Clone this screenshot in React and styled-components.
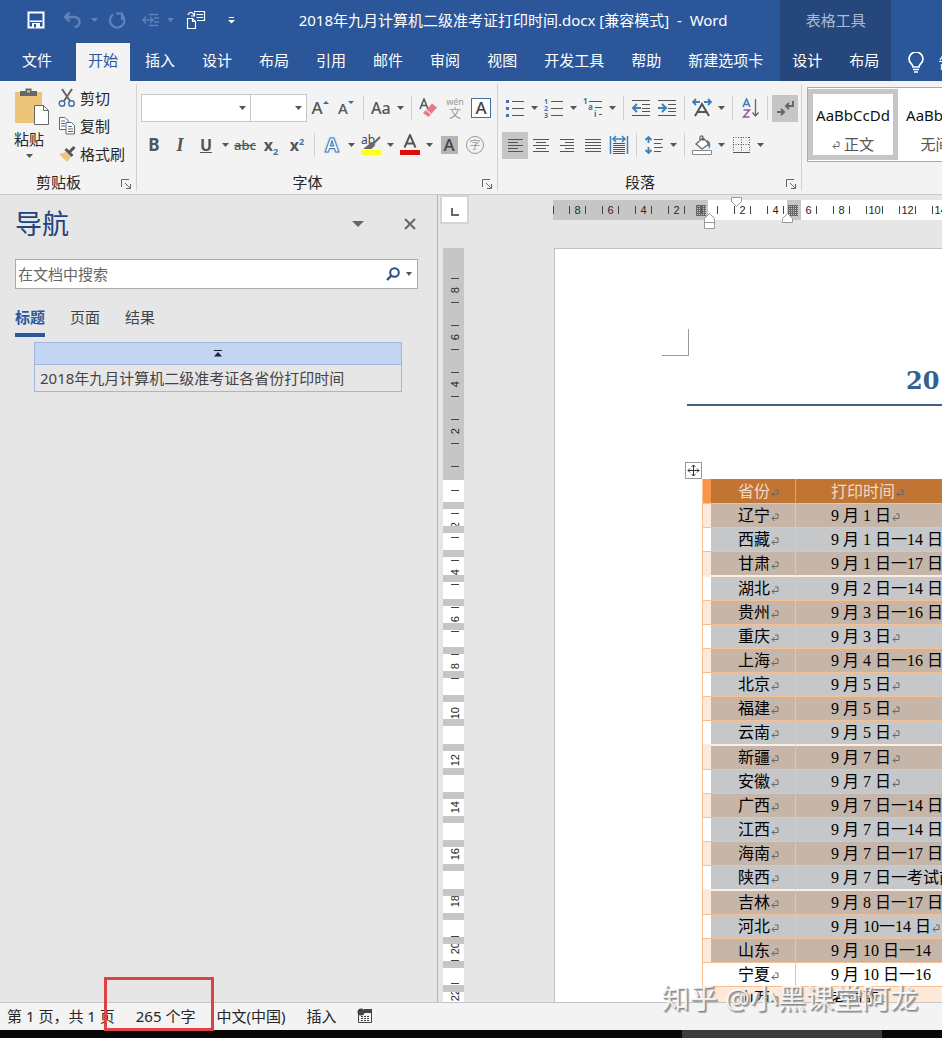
import React, { useState } from 'react';
import styled, { createGlobalStyle, css } from 'styled-components';

const mainTabs = ['开始', '插入', '设计', '布局', '引用', '邮件', '审阅', '视图', '开发工具', '帮助', '新建选项卡'];
const toolTabs = ['设计', '布局'];
const navTabs = ['标题', '页面', '结果'];

const rows = [
    { name: '辽宁', time: '9 月 1 日' },
    { name: '西藏', time: '9 月 1 日一14 日' },
    { name: '甘肃', time: '9 月 1 日一17 日', last: true },
    { name: '湖北', time: '9 月 2 日一14 日' },
    { name: '贵州', time: '9 月 3 日一16 日' },
    { name: '重庆', time: '9 月 3 日' },
    { name: '上海', time: '9 月 4 日一16 日' },
    { name: '北京', time: '9 月 5 日' },
    { name: '福建', time: '9 月 5 日' },
    { name: '云南', time: '9 月 5 日', last: true },
    { name: '新疆', time: '9 月 7 日' },
    { name: '安徽', time: '9 月 7 日' },
    { name: '广西', time: '9 月 7 日一14 日' },
    { name: '江西', time: '9 月 7 日一14 日' },
    { name: '海南', time: '9 月 7 日一17 日' },
    { name: '陕西', time: '9 月 7 日一考试前', last: true },
    { name: '吉林', time: '9 月 8 日一17 日' },
    { name: '河北', time: '9 月 10一14 日' },
    { name: '山东', time: '9 月 10 日一14' },
    { name: '宁夏', time: '9 月 10 日一16', plain: true },
    { name: '山西', time: '考前取', plain: true },
];

const topMarks = [8, 6, 4, 2, '', 2, 4, 6, 8, 10, 12, 14, 16, 18, 20, 22, 24, 26, 28, 30];
const sideMarks = [8, 6, 4, 2, '', 2, 4, 6, 8, 10, 12, 14, 16, 18, 20, 22];

const Glyph = ({ w = 20, h = 20, children }) => (
    <svg width={w} height={h} viewBox={`0 0 ${w} ${h}`} fill="none" aria-hidden="true">{children}</svg>
);

const Caret = ({ color = '#555', w = 7, h = 4 }) => (
    <svg width={w} height={h} viewBox="0 0 7 4" preserveAspectRatio="none" aria-hidden="true">
        <path d="M0 0h7L3.500 4z" fill={color} />
    </svg>
);

const Lines = ({ xs }) => (
    <Glyph>
        {xs.map(([a, b], i) => <path key={i} d={`M${a} ${4.5 + i * 3}H${b}`} stroke="#555" />)}
    </Glyph>
);

const Launcher = () => (
    <Glyph w={10} h={10}>
        <path d="M.5 8V.5H8M4 4l5 5M9.500 5v4.500H5" stroke="#666" />
    </Glyph>
);

const ReturnMark = () => (
    <svg width="8" height="9" viewBox="0 0 8 9" fill="none" aria-hidden="true">
        <path d="M4 1h3v4.500H1M3.500 3L1 5.500 3.500 8" stroke="#666" />
    </svg>
);

function QuickAccess(){
    return (
        <QuickBar>
            <QuickButton $w={36} aria-label="保存">
                <Glyph w={18} h={18}>
                    <path d="M1.500 1.500h15v15h-15z" stroke="#fff" strokeWidth="2" />
                    <path d="M3 9.500h12v1.500H3zM5 12h8v5H5z" fill="#fff" />
                    <path d="M7 13h2v3.500H7z" fill="#2b579a" />
                </Glyph>
            </QuickButton>
            <QuickButton $w={36} aria-label="撤消">
                <Glyph w={20} h={18}>
                    <path d="M7.500 1.500L3 6l4.500 4.500M3.500 6H12c8 0 6.500 10 .5 10" stroke="#5f82b8" strokeWidth="2.400" />
                </Glyph>
            </QuickButton>
            <QuickButton $w={8} aria-label="撤消选项"><Caret color="#5f82b8" /></QuickButton>
            <QuickButton $w={40} aria-label="恢复">
                <Glyph w={20} h={18}>
                    <path d="M5 3.500a7.200 7.200 0 1 0 9.500 1M14 9V2.500H8" stroke="#5f82b8" strokeWidth="2.200" />
                </Glyph>
            </QuickButton>
            <QuickButton $w={26} aria-label="缩进">
                <Glyph w={18} h={16}>
                    <path d="M1 8h9M4 4.500L1 8l3 3.500M8 5l3 3-3 3M7 2.500h9M12 6h5M12 10h5M7 13.500h9" stroke="#5f82b8" strokeWidth="1.400" />
                </Glyph>
            </QuickButton>
            <QuickButton $w={12} aria-label="缩进选项"><Caret color="#5f82b8" /></QuickButton>
            <QuickButton $w={40} aria-label="邮件合并">
                <Glyph w={20} h={20}>
                    <path d="M1.500 8.500h5l3 3v7h-8zM6.500 8.500v3h3M8 1.500h10.500v9H11M10.500 4.500H17M10.500 7.500H17M2 5c1-3 4-4 6 0M8.500 2.500V6H5" stroke="#fff" strokeWidth="1.200" />
                </Glyph>
            </QuickButton>
            <QuickButton $w={30} aria-label="自定义快速访问工具栏">
                <Glyph w={7} h={8}><path d="M1 1.500h5" stroke="#fff" /><path d="M0 4h7L3.500 7.500z" fill="#fff" /></Glyph>
            </QuickButton>
        </QuickBar>
    )
}

function ClipboardGroup(){
    return (
        <Group>
            <ClipboardBody>
                <PasteButton>
                    <Glyph w={36} h={40}>
                        <path d="M1 5h27v31H1z" fill="#ecc57b" />
                        <path d="M6 4h5.500V1.500h6V4H23v5H6z" fill="#666" />
                        <path d="M13 3.500h3v2h-3z" fill="#ecc57b" />
                        <path d="M20.500 18.500h9l5 5v14h-14z" fill="#fff" stroke="#666" />
                        <path d="M29.500 18.500v5h5" stroke="#666" />
                    </Glyph>
                    <PasteLabel>粘贴<Caret /></PasteLabel>
                </PasteButton>
                <ClipboardList>
                    <ClipButton>
                        <Glyph w={18} h={20}>
                            <path d="M4 1l8 12M14 1L6 13" stroke="#666" strokeWidth="2" />
                            <circle cx="4" cy="15.500" r="2.800" stroke="#41719c" strokeWidth="1.400" />
                            <circle cx="13.500" cy="15.500" r="2.800" stroke="#41719c" strokeWidth="1.400" />
                        </Glyph>
                        剪切
                    </ClipButton>
                    <ClipButton>
                        <Glyph w={18} h={20}>
                            <path d="M1.500 1.500h5.500l3 3v9H1.500z" fill="#fff" stroke="#666" />
                            <path d="M3 5h4M3 7.500h4M3 10h4" stroke="#41719c" />
                            <path d="M8 6.500h5.500l3 3v8.500H8z" fill="#fff" stroke="#666" />
                            <path d="M10 10.500h4M10 13h5M10 15.500h5" stroke="#41719c" />
                        </Glyph>
                        复制
                    </ClipButton>
                    <ClipButton>
                        <Glyph w={18} h={20}>
                            <path d="M1 10l7-2 5 5-4 5z" fill="#ecc57b" />
                            <path d="M7.500 5l7 7M10.500 9l6-6" stroke="#555" strokeWidth="3" />
                        </Glyph>
                        格式刷
                    </ClipButton>
                </ClipboardList>
            </ClipboardBody>
            <GroupFoot><span>剪贴板</span><LaunchButton aria-label="剪贴板设置"><Launcher /></LaunchButton></GroupFoot>
        </Group>
    )
}

function FontGroup(){
    return (
        <Group>
            <ToolRows>
                <ToolRow>
                    <FontSelect aria-label="字体" $w={110}><option></option></FontSelect>
                    <FontSelect aria-label="字号" $w={56} $joined><option></option></FontSelect>
                    <Tool aria-label="增大字号">
                        <Letter $size={17}>A</Letter>
                        <Glyph w={6} h={16}><path d="M0 4h6L3 1z" fill="#2f6fb0" /></Glyph>
                    </Tool>
                    <Tool aria-label="减小字号">
                        <Letter $size={15}>A</Letter>
                        <Glyph w={6} h={16}><path d="M0 1h6L3 4z" fill="#2f6fb0" /></Glyph>
                    </Tool>
                    <Rule />
                    <Tool $split aria-label="更改大小写"><Letter $size={16}>Aa</Letter><Caret /></Tool>
                    <Rule />
                    <Tool aria-label="清除格式">
                        <Glyph>
                            <path d="M1 11L5 1l4 10M2.500 7.500h5" stroke="#555" strokeWidth="1.500" />
                            <path d="M4 15L13 5.500l5 4L9.500 19z" fill="#e8798b" />
                            <path d="M7 12l5 4" stroke="#f5d5da" strokeWidth="1.500" />
                        </Glyph>
                    </Tool>
                    <Tool aria-label="拼音指南"><Pinyin><small>wén</small>文</Pinyin></Tool>
                    <Tool aria-label="字符边框"><BoxedLetter>A</BoxedLetter></Tool>
                </ToolRow>
                <ToolRow>
                    <Tool aria-label="加粗"><Letter $bold $size={17}>B</Letter></Tool>
                    <Tool aria-label="倾斜"><Letter $bold $italic $serif $size={18}>I</Letter></Tool>
                    <Tool $split aria-label="下划线"><Indent><Letter $bold $size={16} $line="underline">U</Letter></Indent><Caret /></Tool>
                    <Tool aria-label="删除线"><Letter $size={13} $line="line-through">abc</Letter></Tool>
                    <Tool aria-label="下标"><Letter $bold $size={16}>x<sub>2</sub></Letter></Tool>
                    <Tool aria-label="上标"><Letter $bold $size={16}>x<sup>2</sup></Letter></Tool>
                    <Rule />
                    <Tool $split aria-label="文本效果"><GlowLetter>A</GlowLetter><Caret /></Tool>
                    <Tool $split aria-label="突出显示">
                        <Glyph w={20} h={22}>
                            <text x="0" y="10" fontSize="12" fontFamily="Noto Sans" fill="#444">ab</text>
                            <path d="M19 3l-8 8M11 9l-6 5h5l3-3z" stroke="#666" strokeWidth="2" fill="#666" />
                            <path d="M0 16h20v5H0z" fill="#ffff1e" />
                        </Glyph>
                        <Caret />
                    </Tool>
                    <Tool $split aria-label="字体颜色">
                        <Glyph w={20} h={22}>
                            <path d="M4.500 13.500L10 1l5.500 12.500M6.500 9.500h7" stroke="#555" strokeWidth="2" />
                            <path d="M0 16h20v5H0z" fill="#df0a0a" />
                        </Glyph>
                        <Caret />
                    </Tool>
                    <Tool aria-label="字符底纹"><ShadedLetter>A</ShadedLetter></Tool>
                    <Tool aria-label="带圈字符"><RingedLetter>字</RingedLetter></Tool>
                </ToolRow>
            </ToolRows>
            <GroupFoot><span>字体</span><LaunchButton aria-label="字体设置"><Launcher /></LaunchButton></GroupFoot>
        </Group>
    )
}

function ParagraphGroup(){
    return (
        <Group>
            <ToolRows>
                <ToolRow>
                    <Tool $split aria-label="项目符号">
                        <Glyph>
                            <path d="M1 2h3v3H1zM1 9h3v3H1zM1 16h3v3H1z" fill="#3f74ab" />
                            <path d="M7 3.500h12M7 10.500h12M7 17.500h12" stroke="#555" />
                        </Glyph>
                        <Caret />
                    </Tool>
                    <Tool $split aria-label="编号">
                        <Glyph>
                            <g fontSize="7" fontWeight="bold" fontFamily="Noto Sans" fill="#3f74ab">
                                <text x="0" y="6">1</text><text x="0" y="13">2</text><text x="0" y="20">3</text>
                            </g>
                            <path d="M7 3.500h12M7 10.500h12M7 17.500h12" stroke="#555" />
                        </Glyph>
                        <Caret />
                    </Tool>
                    <Tool $split aria-label="多级列表">
                        <Glyph>
                            <g fontSize="8" fontWeight="bold" fontFamily="Noto Sans" fill="#3f74ab">
                                <text x="0" y="6">1</text><text x="5" y="12">a</text><text x="11" y="19">i</text>
                            </g>
                            <path d="M6 3.500h13M12 9.500h7M16 16.500h3" stroke="#555" />
                        </Glyph>
                        <Caret />
                    </Tool>
                    <Rule />
                    <Tool aria-label="减少缩进量">
                        <Glyph>
                            <path d="M1 2.500h18M11 6.500h8M11 10.500h8M11 13.500h8M1 17.500h18" stroke="#555" />
                            <path d="M2 10h8M6 6l-4 4 4 4" stroke="#3f7fb8" strokeWidth="2" />
                        </Glyph>
                    </Tool>
                    <Tool aria-label="增加缩进量">
                        <Glyph>
                            <path d="M1 2.500h18M11 6.500h8M11 10.500h8M11 13.500h8M1 17.500h18" stroke="#555" />
                            <path d="M1 10h8M5 6l4 4-4 4" stroke="#3f7fb8" strokeWidth="2" />
                        </Glyph>
                    </Tool>
                    <Rule />
                    <Tool $split aria-label="中文版式">
                        <Glyph>
                            <path d="M1 4h7M4 1L1 4l3 3M12 4h7M16 1l3 3-3 3" stroke="#3f7fb8" strokeWidth="1.800" />
                            <path d="M3 18L10 6l7 12M6 14h8" stroke="#555" strokeWidth="2" />
                        </Glyph>
                        <Caret />
                    </Tool>
                    <Rule />
                    <Tool aria-label="排序">
                        <Glyph>
                            <path d="M3 9l3.500-8L10 9M4 6.500h5" stroke="#3f7fb8" strokeWidth="1.600" />
                            <path d="M3.500 12h6l-6 7h6" stroke="#9355a5" strokeWidth="1.500" />
                            <path d="M15.500 1v17M12.500 14.500l3 3.500 3-3.500" stroke="#666" strokeWidth="1.300" />
                        </Glyph>
                    </Tool>
                    <Rule />
                    <Tool $on aria-label="显示编辑标记">
                        <Glyph>
                            <path d="M18 3v5h-6M14 5l-3 3 3 3M2 14h7M6 11l3 3-3 3" stroke="#666" strokeWidth="2" />
                        </Glyph>
                    </Tool>
                </ToolRow>
                <ToolRow>
                    <Tool $on aria-label="左对齐"><Lines xs={[[3, 18], [3, 13], [3, 18], [3, 13], [3, 18]]} /></Tool>
                    <Tool aria-label="居中"><Lines xs={[[2, 18], [5, 15], [2, 18], [5, 15], [2, 18]]} /></Tool>
                    <Tool aria-label="右对齐"><Lines xs={[[3, 17], [8, 17], [3, 17], [8, 17], [3, 17]]} /></Tool>
                    <Tool aria-label="两端对齐"><Lines xs={[[2, 18], [2, 18], [2, 18], [2, 18], [2, 18]]} /></Tool>
                    <Tool aria-label="分散对齐">
                        <Glyph>
                            <path d="M1.500 1v18M18.500 1v18M4 4h12M7 1L4 4l3 3M13 1l3 3-3 3" stroke="#3f7fb8" strokeWidth="1.500" />
                            <path d="M4 8.500h12M4 10.500h12M4 12.500h12M4 14.500h12M4 16.500h12M4 18.500h12" stroke="#555" />
                        </Glyph>
                    </Tool>
                    <Rule />
                    <Tool $split aria-label="行距">
                        <Glyph>
                            <path d="M4.500 2v6M1.500 5l3-3 3 3M4.500 12v6M1.500 15l3 3 3-3" stroke="#3f7fb8" strokeWidth="1.800" />
                            <path d="M10 4.500h9M10 8.500h7M10 12.500h9M10 16.500h7" stroke="#555" />
                        </Glyph>
                        <Caret />
                    </Tool>
                    <Rule />
                    <Tool $split aria-label="底纹">
                        <Glyph>
                            <path d="M4 9l7-6 6 6-7 5zM8 6V2.500c0-2 3-2 3 0V6" stroke="#666" strokeWidth="1.300" fill="#fff" />
                            <path d="M15 5c3 1 4 4 2.500 9L15 8z" fill="#3f7fb8" />
                            <path d="M.5 15.500h19v4H.5z" fill="#fff" stroke="#888" />
                        </Glyph>
                        <Caret />
                    </Tool>
                    <Tool $split aria-label="边框">
                        <Glyph>
                            <path d="M2.500 2v15M10.500 2v15M18.500 2v15M2 2.500h17M2 9.500h17" stroke="#555" strokeDasharray="1 1.500" />
                            <path d="M2 17.500h17" stroke="#555" />
                        </Glyph>
                        <Caret />
                    </Tool>
                </ToolRow>
            </ToolRows>
            <GroupFoot><span>段落</span><LaunchButton aria-label="段落设置"><Launcher /></LaunchButton></GroupFoot>
        </Group>
    )
}

function Navigation(){
    const [tab, setTab] = useState('标题');
    return (
        <NavPane>
            <NavHead>
                <h2>导航</h2>
                <PlainButton aria-label="窗格选项"><Caret color="#666" w={12} h={6} /></PlainButton>
                <PlainButton aria-label="关闭">
                    <Glyph w={12} h={12}><path d="M1 1l10 10M11 1L1 11" stroke="#666" strokeWidth="2" /></Glyph>
                </PlainButton>
            </NavHead>
            <SearchBox>
                <input type="text" aria-label="在文档中搜索" placeholder="在文档中搜索" />
                <PlainButton aria-label="搜索">
                    <Glyph w={14} h={14}>
                        <circle cx="8.500" cy="5.500" r="4.300" stroke="#2b4f84" strokeWidth="2" />
                        <path d="M5.500 8.500L1 13" stroke="#2b4f84" strokeWidth="2.400" />
                    </Glyph>
                </PlainButton>
                <PlainButton aria-label="搜索选项"><Caret w={6} /></PlainButton>
            </SearchBox>
            <NavTabs>
                {navTabs.map((name) => (
                    <NavTab key={name} $on={tab === name} onClick={() => setTab(name)}>{name}</NavTab>
                ))}
            </NavTabs>
            <Outline>
                <OutlineTop>
                    <Glyph w={8} h={8}><path d="M0 .5h8" stroke="#222" /><path d="M0 6.500L4 2l4 4.500z" fill="#222" /></Glyph>
                </OutlineTop>
                <OutlineItem href="#doc">2018年九月计算机二级准考证各省份打印时间</OutlineItem>
            </Outline>
        </NavPane>
    )
}

function DocumentArea(){
    return (
        <Workspace>
            <Corner><CornerBox aria-label="制表符">
                <Glyph w={10} h={10}><path d="M2 1v7h7" stroke="#666" strokeWidth="2" /></Glyph>
            </CornerBox></Corner>
            <TopRuler>
                <TopScale>
                    <EdgeTick />
                    {topMarks.map((m, i) => <TopMark key={i}><i /><span>{m}</span><i /></TopMark>)}
                </TopScale>
                <Markers>
                    <svg width="260" height="34" viewBox="0 0 260 34" fill="none" aria-hidden="true">
                        <path d="M234 3h14v20h-14z" fill="#c6c6c6" />
                        <path d="M143 8.500h10M143 10.500h10M143 12.500h10M143 14.500h10M143 16.500h10M143 18.500h10M235 8.500h10M235 10.500h10M235 12.500h10M235 14.500h10M235 16.500h10M235 18.500h10M143.500 8v11M145.500 8v11M147.500 8v11M149.500 8v11M151.500 8v11M235.500 8v11M237.500 8v11M239.500 8v11M241.500 8v11M243.500 8v11" stroke="#666" />
                        <g fill="#fff" stroke="#999">
                            <path d="M178.500.5h10v4l-5 5-5-5z" />
                            <path d="M151.500 25.500v-4l5-5 5 5v4zM151.500 25.500h10v6h-10z" />
                            <path d="M229.500 25.500v-4l5-5 5 5v4z" />
                        </g>
                    </svg>
                </Markers>
            </TopRuler>
            <SideRuler>
                <SideScale>
                    {sideMarks.map((m, i) => <SideMark key={i}><i /><span>{m}</span><i /></SideMark>)}
                </SideScale>
                <RowBars>
                    {rows.map((r) => <RowBar key={r.name} $gap={r.last ? 18 : 17} />)}
                </RowBars>
            </SideRuler>
            <Page id="doc">
                <CropMark />
                <DocTitle>2018年九月计算机二级准考证各省份打印时间</DocTitle>
                <MoveHandle aria-label="移动表格">
                    <Glyph w={13} h={13}>
                        <path d="M6.500 1v11M1 6.500h11M4.500 3l2-2 2 2M4.500 10l2 2 2-2M3 4.500l-2 2 2 2M10 4.500l2 2-2 2" stroke="#333" />
                    </Glyph>
                </MoveHandle>
                <DocTable>
                    <thead>
                        <tr><th>省份<ReturnMark /></th><th>打印时间<ReturnMark /></th></tr>
                    </thead>
                    <tbody>
                        {rows.map((r) => (
                            <DocRow key={r.name} $last={r.last} $plain={r.plain}>
                                <td>{r.name}<ReturnMark /></td>
                                <td>{r.time}{!/1[46]$/.test(r.time) && <ReturnMark />}</td>
                            </DocRow>
                        ))}
                    </tbody>
                </DocTable>
            </Page>
        </Workspace>
    )
}

export default function App(){
    const [active, setActive] = useState('开始');

    return (
        <>
            <GlobalStyle />
            <Shell>
                <Header>
                    <TitleRow>
                        <QuickAccess />
                        <DocName>2018年九月计算机二级准考证打印时间.docx [兼容模式]&nbsp; -&nbsp; Word</DocName>
                    </TitleRow>
                    <ToolTitle>表格工具</ToolTitle>
                    <TabRow>
                        <FileTab>文件</FileTab>
                        {mainTabs.map((name) => (
                            <Tab key={name} $on={active === name} onClick={() => setActive(name)}>{name}</Tab>
                        ))}
                    </TabRow>
                    <ToolTabRow>
                        {toolTabs.map((name) => <Tab key={name}>{name}</Tab>)}
                    </ToolTabRow>
                    <TellMe>
                        <Glyph w={16} h={21}>
                            <path d="M5 15c0-3-4-4-4-8a7 7 0 0 1 14 0c0 4-4 5-4 8zM5 17.500h6M6 20h4" stroke="#fff" strokeWidth="1.700" />
                        </Glyph>
                        告诉我
                    </TellMe>
                </Header>
                <Ribbon>
                    <ClipboardGroup />
                    <FontGroup />
                    <ParagraphGroup />
                    <Gallery>
                        <StyleCard $on><b>AaBbCcDd</b><span><ReturnMark /> 正文</span></StyleCard>
                        <StyleCard><b>AaBbCcDd</b><span>无间隔</span></StyleCard>
                    </Gallery>
                </Ribbon>
                <Main>
                    <Navigation />
                    <DocumentArea />
                </Main>
                <StatusBar>
                    <span>第 1 页，共 1 页</span>
                    <WordCount>265 个字</WordCount>
                    <span>中文(中国)</span>
                    <span>插入</span>
                    <Glyph w={16} h={16}>
                        <path d="M1.500 4v10.500h13V2.500H6" stroke="#444" />
                        <path d="M7 1h8v4H7z" fill="#444" />
                        <circle cx="4" cy="4" r="3.500" fill="#444" />
                        <path d="M4 8.500h9M4 10.500h9M4 12.500h9" stroke="#444" strokeDasharray="2 1" />
                    </Glyph>
                </StatusBar>
                <Taskbar />
                <Watermark>知乎 @小黑课堂阿龙</Watermark>
            </Shell>
        </>
    )
}

const GlobalStyle = createGlobalStyle`
    * {
        box-sizing: border-box;
    }
    body {
        margin: 0;
        font: 15px/20px "Noto Sans", "Noto Sans CJK SC", sans-serif;
        color: #262626;
    }
    button {
        font: inherit;
        color: inherit;
        background: none;
        border: none;
        padding: 0;
        margin: 0;
    }
    svg {
        flex: none;
    }
`;

const Shell = styled.div`
    position: relative;
    height: 100vh;
    display: flex;
    flex-direction: column;
    overflow: hidden;
    background: #e6e6e6;
`;

const Header = styled.header`
    display: grid;
    grid-template-columns: auto auto 1fr;
    grid-template-rows: 43px 38px;
    flex: none;
    background: #2b579a;
    color: #fff;
    white-space: nowrap;
`;

const TitleRow = styled.div`
    grid-column: 1;
    grid-row: 1;
    display: flex;
    align-items: center;
    min-width: 0;
    padding-bottom: 4px;
`;

const QuickBar = styled.div`
    display: flex;
    align-items: center;
    padding-left: 18px;
`;

const QuickButton = styled.button`
    display: flex;
    align-items: center;
    justify-content: center;
    width: ${(p) => p.$w}px;
    height: 30px;
`;

const DocName = styled.div`
    flex: 1;
    text-align: center;
`;

const ToolTitle = styled.div`
    grid-column: 2;
    grid-row: 1;
    display: flex;
    align-items: center;
    justify-content: center;
    padding-bottom: 4px;
    background: #25477b;
    color: #a9bbd8;
`;

const TabRow = styled.nav`
    grid-column: 1;
    grid-row: 2;
    display: flex;
    gap: 3px;
    padding-right: 5px;
`;

const ToolTabRow = styled.nav`
    grid-column: 2;
    grid-row: 2;
    display: flex;
    gap: 3px;
    background: #25477b;
`;

const Tab = styled.button`
    padding: 0 12px 4px;
    ${(p) => p.$on && css`
        background: #f3f3f3;
        color: #2b579a;
    `}
`;

const FileTab = styled(Tab)`
    padding: 0 21px 4px 22px;
`;

const TellMe = styled.button`
    grid-column: 3;
    grid-row: 2;
    display: flex;
    align-items: center;
    gap: 14px;
    padding-left: 17px;
    overflow: hidden;
`;

const Ribbon = styled.div`
    display: flex;
    flex: none;
    height: 114px;
    overflow: hidden;
    padding-top: 3px;
    background: #f3f3f3;
    border-bottom: 1px solid #c8c8c8;
`;

const Group = styled.section`
    display: flex;
    flex-direction: column;
    flex: none;
    margin-bottom: 3px;
    border-right: 1px solid #d2d2d2;
`;

const GroupFoot = styled.div`
    display: flex;
    align-items: center;
    margin-top: auto;
    height: 18px;
    span {
        flex: 1;
        padding-right: 4px;
        text-align: center;
    }
`;

const LaunchButton = styled.button`
    display: flex;
    align-items: flex-end;
    width: 15px;
    height: 14px;
`;

const ClipboardBody = styled.div`
    display: flex;
    padding: 0 11px 0 14px;
`;

const PasteButton = styled.button`
    display: flex;
    flex-direction: column;
    width: 36px;
    padding-top: 3px;
    gap: 4px;
    margin-right: 8px;
`;

const PasteLabel = styled.span`
    display: flex;
    flex-direction: column;
    align-items: center;
    gap: 7px;
    width: 30px;
    line-height: 16px;
`;

const ClipboardList = styled.div`
    display: flex;
    flex-direction: column;
`;

const ClipButton = styled.button`
    display: flex;
    align-items: center;
    gap: 4px;
    height: 28px;
`;

const ToolRows = styled.div`
    display: flex;
    flex-direction: column;
    gap: 9px;
    padding: 10px 3px 0 4px;
`;

const ToolRow = styled.div`
    display: flex;
    align-items: center;
    height: 28px;
`;

const Tool = styled.button`
    display: flex;
    align-items: center;
    justify-content: ${(p) => (p.$split ? 'space-between' : 'center')};
    width: ${(p) => (p.$split ? 39 : 26)}px;
    height: 27px;
    padding: ${(p) => (p.$split ? '0 3px' : 0)};
    background: ${(p) => (p.$on ? '#c6c6c6' : 'none')};
`;

const Indent = styled.span`
    padding-left: 4px;
`;

const Rule = styled.span`
    width: 1px;
    height: 24px;
    margin: 0 4px;
    background: #d2d2d2;
`;

const FontSelect = styled.select`
    width: ${(p) => p.$w}px;
    height: 28px;
    border: 1px solid #c6c6c6;
    border-left-width: ${(p) => (p.$joined ? 0 : 1)}px;
    border-radius: 0;
    appearance: none;
    background: #fff url("data:image/svg+xml,%3Csvg xmlns='http://www.w3.org/2000/svg' width='7' height='4'%3E%3Cpath d='M0 0h7L3.500 4z' fill='%23555'/%3E%3C/svg%3E") no-repeat right 4px center;
`;

const Letter = styled.span`
    font-family: ${(p) => (p.$serif ? '"Liberation Serif", serif' : 'inherit')};
    font-size: ${(p) => p.$size}px;
    font-weight: ${(p) => (p.$bold ? 700 : 500)};
    font-style: ${(p) => (p.$italic ? 'italic' : 'normal')};
    text-decoration: ${(p) => p.$line || 'none'};
    color: #555;
    line-height: 20px;
    sub, sup {
        font-size: 9px;
        line-height: 0;
        color: #3f74ab;
    }
`;

const Pinyin = styled.span`
    display: flex;
    flex-direction: column;
    align-items: center;
    font-size: 12px;
    line-height: 13px;
    color: #999;
    small {
        font-size: 9px;
        line-height: 10px;
    }
`;

const BoxedLetter = styled.span`
    width: 20px;
    height: 20px;
    border: 1px solid #41719c;
    background: #fff;
    color: #444;
    font-size: 17px;
    font-weight: 500;
    line-height: 18px;
`;

const GlowLetter = styled.span`
    padding-left: 3px;
    font-size: 20px;
    font-weight: 700;
    line-height: 22px;
    color: #fff;
    -webkit-text-stroke: 1px #3f7fb8;
    text-shadow: 0 0 3px #8db8e2;
`;

const ShadedLetter = styled.span`
    width: 17px;
    height: 18px;
    background: #b5b5b5;
    color: #444;
    font-size: 17px;
    font-weight: 500;
    line-height: 18px;
`;

const RingedLetter = styled.span`
    width: 18px;
    height: 18px;
    border: 1px solid #999;
    border-radius: 50%;
    color: #999;
    font-size: 11px;
    line-height: 16px;
`;

const Gallery = styled.div`
    display: flex;
    flex: 1 0 auto;
    height: 75px;
    margin: 3px 0 0 5px;
    border: 1px solid #ababab;
    background: #fff;
`;

const StyleCard = styled.button`
    display: flex;
    flex-direction: column;
    align-items: center;
    justify-content: flex-end;
    gap: 9px;
    width: 90px;
    margin: 1px 0;
    padding-bottom: 1px;
    border: 5px solid ${(p) => (p.$on ? '#c6c6c6' : '#fff')};
    white-space: nowrap;
    b {
        font-weight: 400;
        color: #111;
    }
    span {
        color: #555;
    }
`;

const Main = styled.main`
    display: flex;
    flex: 1;
    min-height: 0;
`;

const NavPane = styled.aside`
    flex: none;
    width: 438px;
    padding: 9px 19px 0 15px;
    border-right: 1px solid #b5b5b5;
`;

const NavHead = styled.div`
    display: flex;
    align-items: center;
    gap: 36px;
    height: 40px;
    h2 {
        flex: 1;
        margin: 0;
        font-size: 27px;
        line-height: 40px;
        font-weight: 400;
        color: #1f437c;
    }
`;

const PlainButton = styled.button`
    display: flex;
    align-items: center;
    justify-content: center;
    min-width: 16px;
    height: 20px;
`;

const SearchBox = styled.div`
    display: flex;
    align-items: center;
    height: 30px;
    margin-top: 15px;
    background: #fff;
    border: 1px solid #ababab;
    input {
        flex: 1;
        min-width: 0;
        border: none;
        outline: none;
        padding: 0 2px;
        font: inherit;
        background: none;
        &::placeholder {
            color: #666;
        }
    }
`;

const NavTabs = styled.div`
    display: flex;
    gap: 25px;
    margin-top: 18px;
`;

const NavTab = styled.button`
    height: 30px;
    padding-bottom: 6px;
    border-bottom: 4px solid ${(p) => (p.$on ? '#2b579a' : 'transparent')};
    color: ${(p) => (p.$on ? '#2b579a' : '#444')};
    font-weight: ${(p) => (p.$on ? 700 : 400)};
`;

const Outline = styled.div`
    margin: 5px 16px 0 19px;
    border: 1px solid #9fb6dd;
`;

const OutlineTop = styled.div`
    display: flex;
    align-items: center;
    justify-content: center;
    height: 22px;
    background: #c2d5f2;
    border-bottom: 1px solid #9fb6dd;
`;

const OutlineItem = styled.a`
    display: block;
    padding: 0 5px;
    line-height: 26px;
    color: #444;
    text-decoration: none;
`;

const Workspace = styled.div`
    flex: 1;
    min-width: 0;
    display: grid;
    grid-template-columns: 115px minmax(0, 1fr);
    grid-template-rows: 53px minmax(0, 1fr);
    overflow: hidden;
`;

const Corner = styled.div`
    padding-left: 2px;
`;

const CornerBox = styled.button`
    display: flex;
    align-items: center;
    justify-content: center;
    width: 29px;
    height: 29px;
    padding-top: 4px;
    background: #fff;
    border: 2px solid #d4d4d4;
`;

const TopRuler = styled.div`
    position: relative;
    padding-top: 5px;
`;

const TopScale = styled.div`
    display: flex;
    align-items: center;
    height: 20px;
    overflow: hidden;
    background: linear-gradient(to right, #c6c6c6 155px, #fff 155px);
`;

const EdgeTick = styled.i`
    flex: none;
    width: 1px;
    height: 8px;
    margin-right: 7px;
    background: #444;
`;

const TopMark = styled.div`
    display: flex;
    flex: none;
    align-items: center;
    justify-content: space-between;
    width: 33px;
    padding: 0 8px;
    font: 11px/20px "Liberation Sans", sans-serif;
    i {
        width: 1px;
        height: 8px;
        background: #444;
    }
`;

const Markers = styled.div`
    position: absolute;
    left: 0;
    top: 2px;
`;

const SideRuler = styled.div`
    position: relative;
    width: 21px;
    margin-left: 5px;
    overflow: hidden;
`;

const SideScale = styled.div`
    display: flex;
    flex-direction: column;
    padding-top: 19px;
    background: linear-gradient(#c6c6c6 232px, #fff 232px);
`;

const SideMark = styled.div`
    display: flex;
    flex-direction: column;
    flex: none;
    align-items: center;
    justify-content: space-between;
    height: 47px;
    padding: 11px 0 11px 2px;
    font: 11px/12px "Liberation Sans", sans-serif;
    i {
        width: 8px;
        height: 1px;
        background: #444;
    }
    span {
        writing-mode: vertical-rl;
        transform: rotate(180deg);
    }
`;

const RowBars = styled.div`
    position: absolute;
    top: 254px;
    left: 0;
    right: 0;
`;

const RowBar = styled.div`
    height: 7px;
    margin-bottom: ${(p) => p.$gap}px;
    background: #c6c6c6;
`;

const Page = styled.article`
    margin-left: 1px;
    padding: 80px 0 0 107px;
    background: #fff;
    border: 1px solid #c0c0c0;
    border-right: none;
    border-bottom: none;
    overflow: hidden;
    white-space: nowrap;
`;

const CropMark = styled.div`
    width: 27px;
    height: 27px;
    border: solid #999;
    border-width: 0 1px 1px 0;
`;

const DocTitle = styled.h1`
    margin: 9px 0 56px 25px;
    padding: 0 0 7px 219px;
    border-bottom: 2px solid #44607f;
    font: bold 24px/32px "DejaVu Serif", "Noto Sans CJK SC", serif;
    color: #365f91;
`;

const MoveHandle = styled.button`
    display: flex;
    align-items: center;
    justify-content: center;
    width: 17px;
    height: 17px;
    margin-left: 23px;
    border: 1px solid #999;
    background: #fff;
`;

const DocTable = styled.table`
    width: calc(100% - 40px);
    margin-left: 40px;
    table-layout: fixed;
    border-collapse: separate;
    border-spacing: 0;
    border-left: 1px solid #fabf8f;
    font: 16px/23px "Liberation Serif", "Noto Sans CJK SC", serif;
    color: #000;
    th, td {
        height: 24px;
        padding: 0 0 0 35px;
        font-weight: inherit;
        text-align: left;
        border-bottom: 1px solid #fabf8f;
    }
    th:first-child, td:first-child {
        width: 93px;
        border-right: 1px solid #fabf8f;
    }
    th {
        height: 25px;
        background: #c07535;
        color: #f3d9c3;
    }
    th:first-child {
        background: linear-gradient(to right, #f79646 8px, #c07535 8px);
        border-right: 1px dotted #d9b090;
    }
    svg {
        margin-left: 1px;
        vertical-align: -1px;
    }
`;

const DocRow = styled.tr`
    --edge: #fff;
    --fill: ${(p) => (p.$plain ? '#fff' : '#c6c7c9')};
    &:nth-child(odd) {
        --edge: #fde9d9;
        --fill: ${(p) => (p.$plain ? '#fde9d9' : '#c6b6aa')};
    }
    td {
        height: ${(p) => (p.$last ? 25 : 24)}px;
        background: var(--fill);
        border-bottom: ${(p) => (p.$last ? '2px solid #fdeee0' : '1px solid #fabf8f')};
    }
    td:first-child {
        background: linear-gradient(to right, var(--edge) 8px, var(--fill) 8px);
    }
`;

const StatusBar = styled.footer`
    display: flex;
    align-items: center;
    flex: none;
    gap: 21px;
    height: 28px;
    padding: 0 0 2px 7px;
    background: #f3f3f3;
    border-top: 1px solid #c6c6c6;
    white-space: nowrap;
`;

const WordCount = styled.span`
    position: relative;
    &::after {
        content: "";
        position: absolute;
        left: -32px;
        right: -19px;
        top: -29px;
        bottom: -5px;
        border: 3px solid #dd4247;
    }
`;

const Taskbar = styled.div`
    flex: none;
    height: 8px;
    background: linear-gradient(to right, transparent 682px, #3c3c3c 682px 882px, transparent 882px) #080808;
`;

const Watermark = styled.div`
    position: absolute;
    right: 24px;
    bottom: 22px;
    font-size: 28px;
    line-height: 36px;
    color: rgba(255, 255, 255, 0.85);
    text-shadow: 1px 1px 1px #888, 2px 2px 1px #aaa;
    white-space: nowrap;
`;
